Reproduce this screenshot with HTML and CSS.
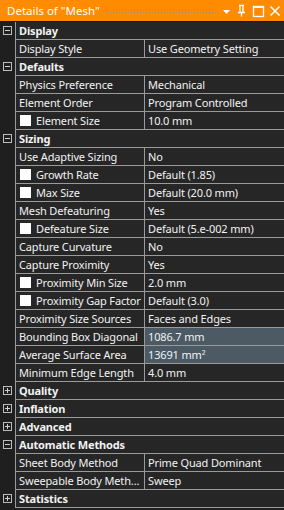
FILE: index.html
```html
<!DOCTYPE html>
<html>
<head>
    <title>Details of "Mesh"</title>
    <link rel="stylesheet" href="styles.css">
</head>
<body>
    <div class="panel">
        <div class="titlebar">
            <span class="title">Details of "Mesh"</span>
            <span class="grip"></span>
            <svg class="ticons" width="62" height="21" viewBox="0 0 62 21">
                <path d="M3 10h7l-3.5 4z" fill="#fff"/>
                <path d="M19 5.5h5M20 5.5v7M23 5.5v7M18 12.5h7M21.5 12.5v4" stroke="#fff" stroke-width="1.3" fill="none"/>
                <rect x="33.5" y="6.5" width="10" height="10" stroke="#fff" stroke-width="1.3" fill="none"/>
                <rect x="33.5" y="6" width="10" height="2" fill="#fff"/>
                <path d="M50.5 6.5l9 9M59.5 6.5l-9 9" stroke="#fff" stroke-width="1.5"/>
            </svg>
        </div>

        <div class="row cat"><span class="gut"><i class="box minus"></i></span><span class="head">Display</span></div>
        <div class="row"><span class="gut"></span><span class="lbl">Display Style</span><span class="val">Use Geometry Setting</span></div>

        <div class="row cat"><span class="gut"><i class="box minus"></i></span><span class="head">Defaults</span></div>
        <div class="row"><span class="gut"></span><span class="lbl">Physics Preference</span><span class="val">Mechanical</span></div>
        <div class="row"><span class="gut"></span><span class="lbl">Element Order</span><span class="val">Program Controlled</span></div>
        <div class="row"><span class="gut"></span><span class="lbl"><i class="chk"></i>Element Size</span><span class="val">10.0 mm</span></div>

        <div class="row cat"><span class="gut"><i class="box minus"></i></span><span class="head">Sizing</span></div>
        <div class="row"><span class="gut"></span><span class="lbl">Use Adaptive Sizing</span><span class="val">No</span></div>
        <div class="row"><span class="gut"></span><span class="lbl"><i class="chk"></i>Growth Rate</span><span class="val">Default (1.85)</span></div>
        <div class="row"><span class="gut"></span><span class="lbl"><i class="chk"></i>Max Size</span><span class="val">Default (20.0 mm)</span></div>
        <div class="row"><span class="gut"></span><span class="lbl">Mesh Defeaturing</span><span class="val">Yes</span></div>
        <div class="row"><span class="gut"></span><span class="lbl"><i class="chk"></i>Defeature Size</span><span class="val">Default (5.e-002 mm)</span></div>
        <div class="row"><span class="gut"></span><span class="lbl">Capture Curvature</span><span class="val">No</span></div>
        <div class="row"><span class="gut"></span><span class="lbl">Capture Proximity</span><span class="val">Yes</span></div>
        <div class="row"><span class="gut"></span><span class="lbl"><i class="chk"></i>Proximity Min Size</span><span class="val">2.0 mm</span></div>
        <div class="row"><span class="gut"></span><span class="lbl"><i class="chk"></i>Proximity Gap Factor</span><span class="val">Default (3.0)</span></div>
        <div class="row"><span class="gut"></span><span class="lbl">Proximity Size Sources</span><span class="val">Faces and Edges</span></div>
        <div class="row"><span class="gut"></span><span class="lbl">Bounding Box Diagonal</span><span class="val hl">1086.7 mm</span></div>
        <div class="row"><span class="gut"></span><span class="lbl">Average Surface Area</span><span class="val hl">13691 mm²</span></div>
        <div class="row"><span class="gut"></span><span class="lbl">Minimum Edge Length</span><span class="val">4.0 mm</span></div>

        <div class="row cat"><span class="gut"><i class="box plus"></i></span><span class="head">Quality</span></div>
        <div class="row cat"><span class="gut"><i class="box plus"></i></span><span class="head">Inflation</span></div>
        <div class="row cat"><span class="gut"><i class="box plus"></i></span><span class="head">Advanced</span></div>
        <div class="row cat"><span class="gut"><i class="box minus"></i></span><span class="head">Automatic Methods</span></div>
        <div class="row"><span class="gut"></span><span class="lbl">Sheet Body Method</span><span class="val">Prime Quad Dominant</span></div>
        <div class="row"><span class="gut"></span><span class="lbl">Sweepable Body Meth...</span><span class="val">Sweep</span></div>
        <div class="row cat"><span class="gut"><i class="box plus"></i></span><span class="head">Statistics</span></div>
    </div>
</body>
</html>
```

FILE: styles.css
```css
body {
    margin: 0;
    background: #1e1e1e;
    font-family: "Noto Sans", "Open Sans", sans-serif;
    font-size: 11px;
    letter-spacing: -0.15px;
    color: #f2f2f2;
}

.panel {
    width: 284px;
    height: 510px;
    background: #1f1f1f;
    overflow: hidden;
}

.titlebar {
    height: 21px;
    background: #ff8c00;
    border-bottom: 1px solid #1a1a1a;
    display: flex;
    align-items: center;
}

.title {
    padding-left: 7px;
    font-size: 11.5px;
    letter-spacing: 0;
    color: #fff;
    white-space: nowrap;
}

.grip {
    flex: 1;
    height: 6px;
    margin: 0 2px 0 6px;
    background-image: radial-gradient(circle, #6aa0b0 0.8px, transparent 1px);
    background-size: 3px 3px;
}

.ticons {
    flex: none;
    margin-right: 2px;
}

.row {
    display: flex;
    height: 18px;
    line-height: 17px;
}

.gut {
    width: 15px;
    flex: none;
    background: #1f1f1f;
    border-right: 1px solid #9a9a9a;
    position: relative;
}

.lbl, .val, .head {
    background: #262626;
    border-bottom: 1px solid #9a9a9a;
    padding-left: 3px;
    white-space: nowrap;
    overflow: hidden;
}

.lbl {
    width: 125px;
    flex: none;
    border-right: 1px solid #9a9a9a;
    display: flex;
    align-items: center;
}

.val {
    flex: 1;
}

.val.hl {
    background: #4b5a65;
}

.head {
    flex: 1;
    font-weight: bold;
}

.chk {
    width: 11px;
    height: 11px;
    background: #fff;
    margin: 0 5px 0 1px;
    flex: none;
}

.box {
    position: absolute;
    left: 3px;
    top: 4px;
    width: 7px;
    height: 7px;
    border: 1px solid #bdbdbd;
}

.box::before {
    content: "";
    position: absolute;
    left: 1px;
    top: 3px;
    width: 5px;
    height: 1px;
    background: #d0d0d0;
}

.box.plus::after {
    content: "";
    position: absolute;
    left: 3px;
    top: 1px;
    width: 1px;
    height: 5px;
    background: #d0d0d0;
}
```
